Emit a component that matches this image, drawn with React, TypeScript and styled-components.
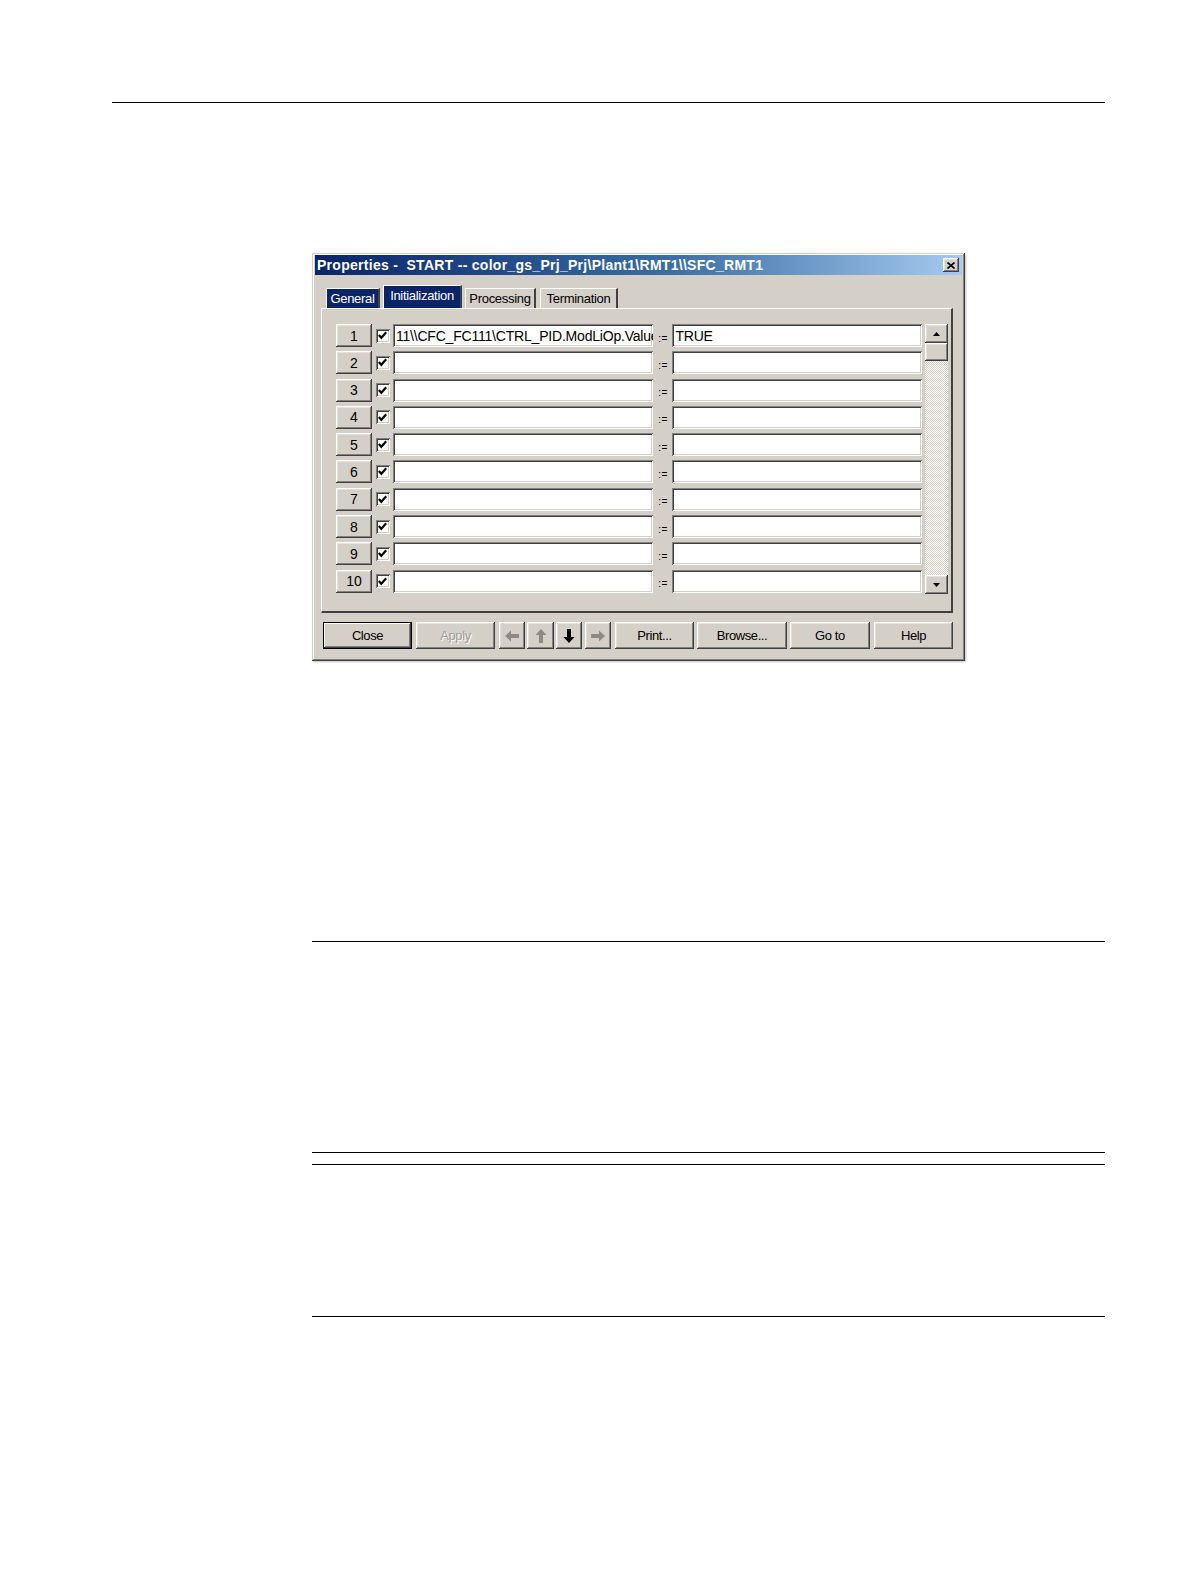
import React from 'react';
import styled, { createGlobalStyle } from 'styled-components';

const GlobalStyle = createGlobalStyle`
  html, body {
    margin: 0;
    padding: 0;
    background: #ffffff;
  }
  body {
    font-family: "Liberation Sans", Arial, sans-serif;
  }
`;

const raised = `
  box-shadow: inset -1px -1px #404040, inset 1px 1px #ffffff,
    inset -2px -2px #808080, inset 2px 2px #e4e1da;
`;

const sunken = `
  box-shadow: inset 1px 1px #808080, inset -1px -1px #ffffff,
    inset 2px 2px #404040, inset -2px -2px #d4d0c8;
`;

const Page = styled.div`
  padding-top: 102px;
  padding-bottom: 40px;
`;

const Rule = styled.div<{ $left: number; $top: number }>`
  margin-left: ${(p) => p.$left}px;
  margin-top: ${(p) => p.$top}px;
  width: ${(p) => 1105 - p.$left}px;
  height: 1px;
  background: #000;
`;

const Dialog = styled.div`
  margin-left: 312px;
  margin-top: 150px;
  width: 653px;
  height: 408px;
  box-sizing: border-box;
  background: #d4d0c8;
  padding: 2px 3px 0;
  box-shadow: inset -1px -1px #404040, inset 1px 1px #d4d0c8,
    inset -2px -2px #808080, inset 2px 2px #ffffff, 1px 1px 2px rgba(0, 0, 0, 0.25);
  font-size: 13px;
  color: #000;
`;

const TitleBar = styled.div`
  height: 20px;
  display: flex;
  align-items: center;
  justify-content: space-between;
  padding: 0 3px 0 2px;
  background: linear-gradient(to right, #0a246a 0%, #3a6ea5 55%, #a6caf0 100%);
  color: #fff;
  font-weight: bold;
  font-size: 14px;
  letter-spacing: 0.28px;
  white-space: pre;
`;

const CloseBox = styled.div`
  width: 16px;
  height: 14px;
  background: #d4d0c8;
  ${raised}
  display: flex;
  align-items: center;
  justify-content: center;
`;

const Body = styled.div`
  padding: 10px 9px 0 6px;
`;

const Tabs = styled.div`
  display: flex;
  align-items: flex-end;
  height: 23px;
  padding-left: 5px;
`;

const Tab = styled.div<{ $active?: boolean; $focus?: boolean; $w: number; $gap: number }>`
  width: ${(p) => p.$w}px;
  height: ${(p) => (p.$active ? 23 : 20)}px;
  margin-right: ${(p) => p.$gap}px;
  box-sizing: border-box;
  display: flex;
  align-items: center;
  justify-content: center;
  padding-bottom: ${(p) => (p.$active ? 3 : 0)}px;
  background: ${(p) => (p.$active || p.$focus ? '#0a246a' : '#d4d0c8')};
  color: ${(p) => (p.$active || p.$focus ? '#fff' : '#000')};
  border-top: 1px solid #fff;
  border-left: 1px solid #fff;
  border-right: 2px solid #404040;
  font-size: 13px;
  letter-spacing: -0.3px;
`;

const Panel = styled.div`
  width: 632px;
  height: 305px;
  box-sizing: border-box;
  border-left: 1px solid #fff;
  border-top: 1px solid #fff;
  border-right: 2px solid #404040;
  border-bottom: 2px solid #404040;
  padding: 15px 0 0 14px;
  display: flex;
`;

const Rows = styled.div`
  display: flex;
  flex-direction: column;
  gap: 4.3px;
  width: 586px;
`;

const Row = styled.div`
  display: flex;
  align-items: center;
  height: 23px;
`;

const NumButton = styled.div`
  width: 36px;
  height: 23px;
  box-sizing: border-box;
  ${raised}
  display: flex;
  align-items: center;
  justify-content: center;
  font-size: 14px;
  margin-right: 4px;
`;

const Check = styled.div`
  width: 14px;
  height: 14px;
  box-sizing: border-box;
  background: #fff;
  ${sunken}
  display: flex;
  align-items: center;
  justify-content: center;
  margin-right: 3px;
`;

const Field = styled.div<{ $w: number }>`
  width: ${(p) => p.$w}px;
  height: 23px;
  box-sizing: border-box;
  background: #fff;
  ${sunken}
  padding: 0 3px;
  display: flex;
  align-items: center;
  overflow: hidden;
  white-space: nowrap;
  font-size: 14px;
  letter-spacing: -0.2px;
`;

const Assign = styled.div`
  width: 19px;
  text-align: center;
  font-size: 10px;
  padding-top: 5px;
  letter-spacing: 0.5px;
`;

const ScrollBar = styled.div`
  margin-left: 3px;
  width: 23px;
  height: 270px;
  display: flex;
  flex-direction: column;
  background-color: #eceae6;
  background-image: repeating-conic-gradient(#d4d0c8 0 25%, #ffffff 0 50%);
  background-size: 2px 2px;
`;

const ScrollButton = styled.div<{ $h: number }>`
  height: ${(p) => p.$h}px;
  background: #d4d0c8;
  ${raised}
  display: flex;
  align-items: center;
  justify-content: center;
`;

const Track = styled.div`
  flex: 1;
`;

const Buttons = styled.div`
  display: flex;
  margin-top: 9px;
  padding-left: 2px;
`;

const Button = styled.div<{ $w: number; $gap: number; $default?: boolean; $disabled?: boolean }>`
  width: ${(p) => p.$w}px;
  margin-right: ${(p) => p.$gap}px;
  height: 27px;
  box-sizing: border-box;
  background: #d4d0c8;
  ${(p) =>
    p.$default
      ? `box-shadow: inset 0 0 0 1px #000, inset -2px -2px #404040, inset 2px 2px #ffffff, inset -3px -3px #808080;`
      : raised}
  display: flex;
  align-items: center;
  justify-content: center;
  font-size: 13px;
  letter-spacing: -0.4px;
  color: ${(p) => (p.$disabled ? '#a09d96' : '#000')};
  text-shadow: ${(p) => (p.$disabled ? '1px 1px 0 #fff' : 'none')};
`;

const ArrowIcon = ({ dir, color }: { dir: 'left' | 'up' | 'down' | 'right'; color: string }) => {
  const rot = { up: 0, right: 90, down: 180, left: 270 }[dir];
  return (
    <svg width="14" height="16" viewBox="0 0 14 16">
      <g transform={`rotate(${rot} 7 8)`}>
        <path d="M7 1 L12.5 7 L9 7 L9 15 L5 15 L5 7 L1.5 7 Z" fill={color} />
      </g>
    </svg>
  );
};

const Triangle = ({ up }: { up?: boolean }) => (
  <svg width="7" height="4" viewBox="0 0 7 4">
    <path d={up ? 'M0 4 L3.5 0 L7 4 Z' : 'M0 0 L7 0 L3.5 4 Z'} fill="#000" />
  </svg>
);

const CheckMark = () => (
  <svg width="9" height="9" viewBox="0 0 9 9">
    <path d="M0.8 4 L3.3 6.8 L8.2 1.2" stroke="#000" strokeWidth="2.2" fill="none" />
  </svg>
);

const rows = Array.from({ length: 10 }, (_, i) => ({
  n: i + 1,
  left: i === 0 ? '11\\\\CFC_FC111\\CTRL_PID.ModLiOp.Value' : '',
  right: i === 0 ? 'TRUE' : '',
}));

export default function App(): React.ReactElement {
  return (
    <>
      <GlobalStyle />
      <Page>
        <Rule $left={112} $top={0} />
        <Dialog>
          <TitleBar>
            <span>{'Properties -  START -- color_gs_Prj_Prj\\Plant1\\RMT1\\\\SFC_RMT1'}</span>
            <CloseBox>
              <svg width="8" height="7" viewBox="0 0 8 7">
                <path d="M0.5 0.5 L7.5 6.5 M7.5 0.5 L0.5 6.5" stroke="#000" strokeWidth="1.6" />
              </svg>
            </CloseBox>
          </TitleBar>
          <Body>
            <Tabs>
              <Tab $w={54} $gap={3} $focus>General</Tab>
              <Tab $w={79} $gap={3} $active>Initialization</Tab>
              <Tab $w={71} $gap={4}>Processing</Tab>
              <Tab $w={78} $gap={0}>Termination</Tab>
            </Tabs>
            <Panel>
              <Rows>
                {rows.map((r) => (
                  <Row key={r.n}>
                    <NumButton>{r.n}</NumButton>
                    <Check>
                      <CheckMark />
                    </Check>
                    <Field $w={261}>{r.left}</Field>
                    <Assign>:=</Assign>
                    <Field $w={250}>{r.right}</Field>
                  </Row>
                ))}
              </Rows>
              <ScrollBar>
                <ScrollButton $h={19}>
                  <Triangle up />
                </ScrollButton>
                <ScrollButton $h={18} />
                <Track />
                <ScrollButton $h={19}>
                  <Triangle />
                </ScrollButton>
              </ScrollBar>
            </Panel>
            <Buttons>
              <Button $w={89} $gap={4} $default>Close</Button>
              <Button $w={79} $gap={4} $disabled>Apply</Button>
              <Button $w={26} $gap={2}>
                <ArrowIcon dir="left" color="#8d8a84" />
              </Button>
              <Button $w={27} $gap={2}>
                <ArrowIcon dir="up" color="#8d8a84" />
              </Button>
              <Button $w={26} $gap={3}>
                <ArrowIcon dir="down" color="#000" />
              </Button>
              <Button $w={26} $gap={4}>
                <ArrowIcon dir="right" color="#8d8a84" />
              </Button>
              <Button $w={79} $gap={3}>Print...</Button>
              <Button $w={90} $gap={3}>Browse...</Button>
              <Button $w={80} $gap={4}>Go to</Button>
              <Button $w={79} $gap={0}>Help</Button>
            </Buttons>
          </Body>
        </Dialog>
        <Rule $left={312} $top={280} />
        <Rule $left={312} $top={210} />
        <Rule $left={312} $top={11} />
        <Rule $left={312} $top={151} />
      </Page>
    </>
  );
}
